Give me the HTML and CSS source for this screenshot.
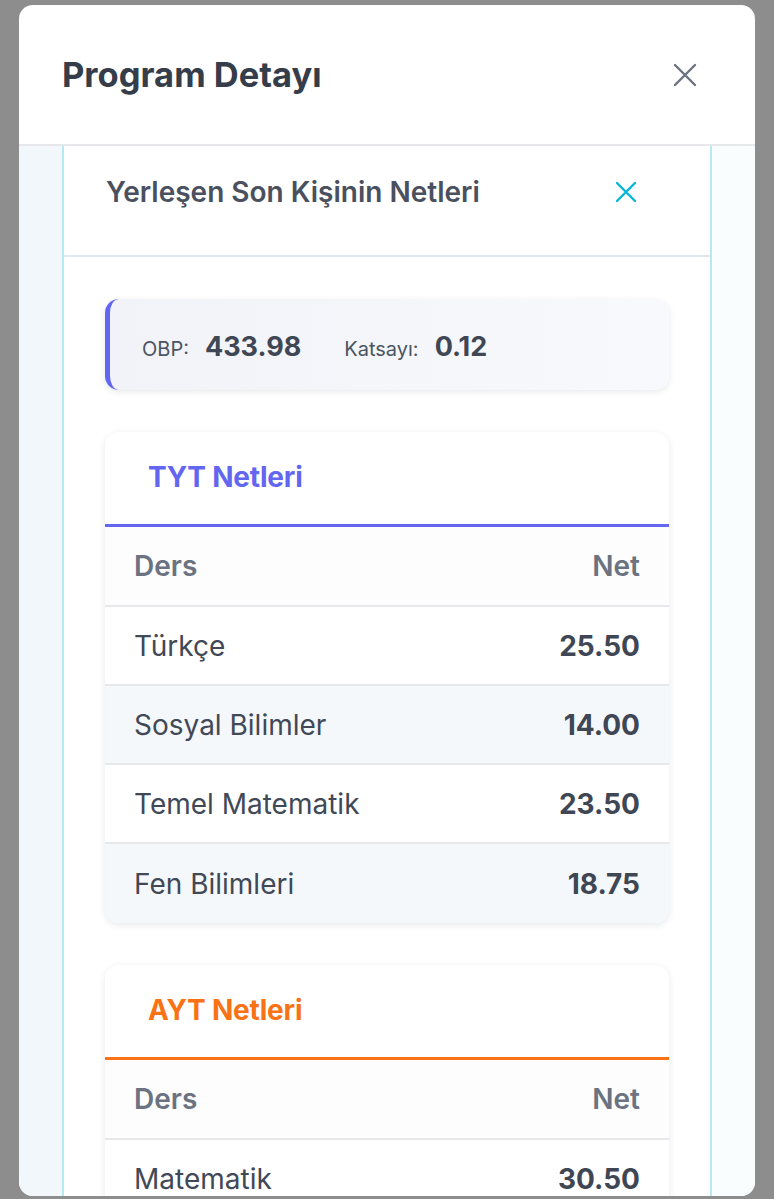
FILE: index.html
```html
<!DOCTYPE html>
<html lang="tr">
<head>
<meta charset="utf-8">
<title>Program Detayı</title>
<link rel="stylesheet" href="styles.css">
</head>
<body>
<div class="modal">
  <div class="modal-header">
    <h1 class="modal-title">Program Detayı</h1>
    <button class="close-btn" aria-label="Kapat">
      <svg width="26" height="26" viewBox="0 0 26 26"><path d="M3 3L23 23M23 3L3 23" stroke="#6b7280" stroke-width="2.4" stroke-linecap="round" fill="none"/></svg>
    </button>
  </div>
  <div class="modal-body">
    <div class="panel">
      <div class="panel-header">
        <h2 class="panel-title">Yerleşen Son Kişinin Netleri</h2>
        <button class="panel-close" aria-label="Kapat">
          <svg width="22" height="22" viewBox="0 0 22 22"><path d="M2 2L20 20M20 2L2 20" stroke="#06b6d4" stroke-width="2.4" stroke-linecap="round" fill="none"/></svg>
        </button>
      </div>
      <div class="panel-content">
        <div class="score-card">
          <div class="score-item"><span class="score-label">OBP:</span><span class="score-value">433.98</span></div>
          <div class="score-item"><span class="score-label">Katsayı:</span><span class="score-value">0.12</span></div>
        </div>

        <div class="net-card tyt">
          <div class="net-card-header"><h3 class="net-card-title">TYT Netleri</h3></div>
          <div class="net-row head"><span>Ders</span><span>Net</span></div>
          <div class="net-row"><span class="subject">Türkçe</span><span class="value">25.50</span></div>
          <div class="net-row alt"><span class="subject">Sosyal Bilimler</span><span class="value">14.00</span></div>
          <div class="net-row"><span class="subject">Temel Matematik</span><span class="value">23.50</span></div>
          <div class="net-row alt"><span class="subject">Fen Bilimleri</span><span class="value">18.75</span></div>
        </div>

        <div class="net-card ayt">
          <div class="net-card-header"><h3 class="net-card-title">AYT Netleri</h3></div>
          <div class="net-row head"><span>Ders</span><span>Net</span></div>
          <div class="net-row"><span class="subject">Matematik</span><span class="value">30.50</span></div>
          <div class="net-row alt"><span class="subject">Fizik</span><span class="value">10.00</span></div>
        </div>
      </div>
    </div>
  </div>
</div>
</body>
</html>
```

FILE: styles.css
```css
* { box-sizing: border-box; }
html, body { margin: 0; padding: 0; height: 100%; overflow: hidden; }
body {
  background: #8d8d8d;
  font-family: Inter, "Noto Sans", sans-serif;
  color: #374151;
}
.modal {
  margin: 5px 19px 0;
  height: 1191px;
  background: #ffffff;
  border-radius: 14px;
  overflow: hidden;
  display: flex;
  flex-direction: column;
}
.modal-header {
  height: 141px;
  flex: none;
  display: flex;
  align-items: center;
  justify-content: space-between;
  padding: 0 57px 0 43px;
  border-bottom: 2px solid #e6e8ec;
}
.modal-title {
  margin: 0;
  font-size: 34.5px;
  font-weight: 700;
  color: #353c4a;
  letter-spacing: 0;
}
.close-btn, .panel-close {
  border: 0;
  background: none;
  padding: 0;
  display: flex;
}
.modal-body {
  flex: 1;
  background: linear-gradient(90deg, #f1f7fb 0%, #fafdfe 100%);
  padding: 0 43px;
  min-height: 0;
}
.panel {
  height: 100%;
  background: #ffffff;
  border-left: 2px solid #b8e8f1;
  border-right: 2px solid #b8e8f1;
}
.panel-header {
  height: 111px;
  display: flex;
  align-items: flex-start;
  justify-content: space-between;
  padding: 28px 73px 0 42px;
  border-bottom: 2px solid #e0e8ee;
}
.panel-title {
  margin: 0;
  font-size: 28px;
  line-height: 36px;
  font-weight: 600;
  color: #4a505e;
  letter-spacing: 0;
}
.panel-close { margin-top: 7px; }
.panel-content {
  padding: 42px 41px 0 41px;
  display: flex;
  flex-direction: column;
  gap: 42px;
}
.score-card {
  height: 91px;
  border-left: 5px solid #6366f1;
  border-radius: 14px;
  background: linear-gradient(90deg, #f1f3f8 0%, #f7f9fc 100%);
  box-shadow: 0 2px 6px rgba(30, 41, 59, 0.10);
  display: flex;
  align-items: center;
  padding: 4px 0 0 32px;
  gap: 43px;
}
.score-item {
  display: flex;
  align-items: baseline;
  gap: 16px;
}
.score-label {
  font-size: 20px;
  color: #4b5563;
}
.score-value {
  font-size: 27px;
  font-weight: 700;
  color: #3f4654;
}
.net-card {
  background: #ffffff;
  border-radius: 14px;
  box-shadow: 0 2px 7px rgba(30, 41, 59, 0.10);
  overflow: hidden;
}
.net-card-header {
  height: 95px;
  display: flex;
  align-items: center;
  padding: 0 43px 0 43px;
  border-bottom: 3px solid #6366f1;
}
.net-card-title {
  margin: 0 0 2px;
  font-size: 28px;
  font-weight: 700;
  color: #6366f1;
  letter-spacing: -0.2px;
}
.ayt .net-card-header { border-bottom-color: #f97316; }
.ayt .net-card-title { color: #f97316; }
.net-row {
  height: 79px;
  display: flex;
  align-items: center;
  justify-content: space-between;
  padding: 0 29px;
  border-bottom: 2px solid #e6e8ec;
  font-size: 28px;
}
.net-row:last-child { border-bottom: 0; }
.net-row.head {
  height: 80px;
  font-weight: 600;
  color: #6b7280;
  background: #fdfdfd;
}
.net-row.alt { background: #f5f8fb; }
.subject { color: #414856; }
.value { font-weight: 700; color: #3f4654; }
```
